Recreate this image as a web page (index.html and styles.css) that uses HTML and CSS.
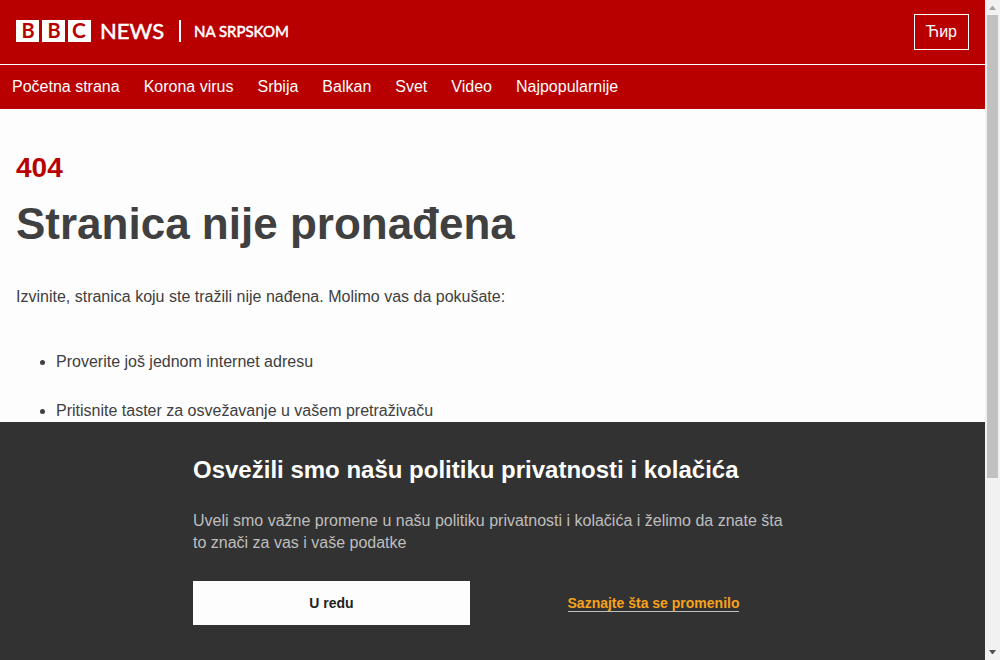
FILE: index.html
```html
<!DOCTYPE html>
<html lang="sr-Latn">
<head>
<meta charset="utf-8">
<meta name="viewport" content="width=device-width, initial-scale=1">
<title>Stranica nije pronađena - BBC News na srpskom</title>
<link rel="stylesheet" href="styles.css">
</head>
<body>
<div class="page">
  <header>
    <div class="brand-bar">
      <a class="brand" href="#" aria-label="BBC News na srpskom">
        <svg class="logo" width="284" height="36" viewBox="0 -6 284 36">
          <path class="logo-block" d="M0 0h23v22H0zM26 0h23v22H26zM52 0h23v22H52z"/>
          <g class="logo-bbc" text-anchor="middle">
            <text x="12" y="18">B</text>
            <text x="38" y="18">B</text>
            <text class="logo-c" x="63" y="18">C</text>
          </g>
          <text class="logo-news" x="84" y="19">NEWS</text>
          <path class="logo-block" d="M163 0h2v22h-2z"/>
          <text class="logo-service" x="178" y="17">NA SRPSKOM</text>
        </svg>
      </a>
      <button class="script-switch" type="button" lang="sr-Cyrl">Ћир</button>
    </div>
    <nav class="nav">
      <a href="#">Početna strana</a>
      <a href="#">Korona virus</a>
      <a href="#">Srbija</a>
      <a href="#">Balkan</a>
      <a href="#">Svet</a>
      <a href="#">Video</a>
      <a href="#">Najpopularnije</a>
    </nav>
  </header>
  <main class="content">
    <p class="status">404</p>
    <h1 class="title">Stranica nije pronađena</h1>
    <p class="intro">Izvinite, stranica koju ste tražili nije nađena. Molimo vas da pokušate:</p>
    <ul class="tips">
      <li>Proverite još jednom internet adresu</li>
      <li>Pritisnite taster za osvežavanje u vašem pretraživaču</li>
    </ul>
  </main>
  <section class="consent" aria-labelledby="consent-title">
    <div class="consent-inner">
      <h2 class="consent-title" id="consent-title">Osvežili smo našu politiku privatnosti i kolačića</h2>
      <p class="consent-text">Uveli smo važne promene u našu politiku privatnosti i kolačića i želimo da znate šta to znači za vas i vaše podatke</p>
      <div class="consent-actions">
        <button class="accept" type="button">U redu</button>
        <a class="more" href="#">Saznajte šta se promenilo</a>
      </div>
    </div>
  </section>
</div>
<div class="scrollbar" aria-hidden="true">
  <svg width="15" height="15" viewBox="0 0 15 15"><path fill="#a3a3a3" d="M4 10h7L8 6H7z"/></svg>
  <div class="track"><div class="thumb"></div></div>
  <svg width="15" height="15" viewBox="0 0 15 15"><path fill="#505050" d="M4 5h7L8 9H7z"/></svg>
</div>
</body>
</html>
```
FILE: styles.css
```css
* {
  box-sizing: border-box;
}

body {
  margin: 0;
  height: 100vh;
  display: flex;
  overflow: hidden;
  background: #fdfdfd;
  color: #404040;
  font: 16px/22px "Liberation Sans", Arial, sans-serif;
}

h1, h2, p, ul {
  margin: 0;
}

button {
  font: inherit;
  cursor: pointer;
}

.page {
  position: relative;
  flex: 1;
  min-width: 0;
  overflow: hidden;
}

/* Header */
.brand-bar {
  display: flex;
  align-items: center;
  justify-content: space-between;
  min-height: 64px;
  padding: 0 16px;
  background: #b80000;
}

.brand,
.logo {
  display: block;
}

.logo {
  overflow: visible;
}

.logo-block {
  fill: #fff;
}

.logo text {
  font-family: Lato, sans-serif;
  line-height: 1;
  fill: #fff;
}

.logo .logo-bbc text {
  font-size: 20px;
  font-weight: 700;
  fill: #b80000;
}

.logo .logo-bbc .logo-c {
  font-size: 21px;
}

.logo .logo-news {
  font-size: 22px;
  stroke: #fff;
  stroke-width: 0.5;
}

.logo .logo-service {
  font-size: 15px;
  stroke: #fff;
  stroke-width: 0.5;
}

.script-switch {
  height: 36px;
  padding: 0 11px;
  border: 1px solid #fff;
  background: #b80000;
  color: #fdfdfd;
}

.nav {
  display: flex;
  padding: 0 12px;
  gap: 24px;
  border-top: 1px solid #fff;
  background: #b80000;
}

.nav a {
  color: #fdfdfd;
  line-height: 44px;
  text-decoration: none;
  white-space: nowrap;
}

/* Error message */
.content {
  padding: 43px 16px;
}

.status {
  color: #b80000;
  font-size: 28px;
  font-weight: 700;
  line-height: 32px;
}

.title {
  margin: 16px 0 38px;
  font-size: 44px;
  line-height: 48px;
}

.tips {
  display: grid;
  gap: 27px;
  margin-top: 43px;
  padding-left: 40px;
}

/* Privacy banner */
.consent {
  position: absolute;
  left: 0;
  right: 0;
  bottom: 0;
  padding: 32px 16px 35px;
  background: #323232;
}

.consent-inner {
  max-width: 599px;
  margin: 0 auto;
}

.consent-title {
  margin-bottom: 24px;
  color: #fff;
  font-size: 24px;
  line-height: 32px;
}

.consent-text {
  margin-bottom: 27px;
  color: #bebebe;
}

.consent-actions {
  display: grid;
  grid-template-columns: 1fr 1fr;
  align-items: center;
  gap: 45px;
  font-size: 14px;
  font-weight: 700;
}

.accept {
  height: 44px;
  border: 0;
  background: #fdfdfd;
  color: #222;
}

.more {
  justify-self: center;
  border-bottom: 1px solid #bebebe;
  color: #f6a21d;
  line-height: 16px;
  text-decoration: none;
}

/* Window scrollbar */
.scrollbar {
  display: flex;
  flex-direction: column;
  flex: none;
  width: 15px;
  background: #f1f1f1;
}

.track {
  flex: 1;
  padding: 0 2px;
}

.thumb {
  height: 73.5%;
  background: #c1c1c1;
}
```
